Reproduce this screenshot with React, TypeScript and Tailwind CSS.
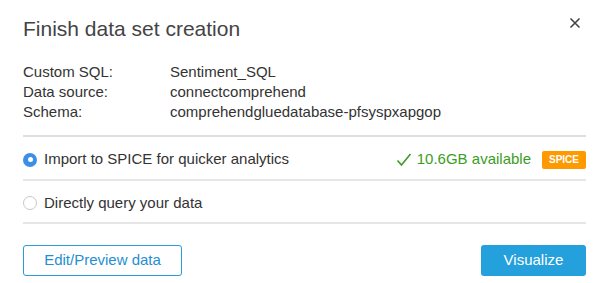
export default function App() {
  return (
    <main className="relative w-[600px] h-[283px] bg-white pl-[23px] pr-[14px] font-['Liberation_Sans',Arial,sans-serif] text-[#333]">
      <h1 className="pt-[15px] text-[21px] leading-[28px] text-[#444]">Finish data set creation</h1>
      <button className="absolute right-[19px] top-[17px] w-[12px] h-[12px]" aria-label="Close">
        <svg viewBox="0 0 12 12" className="w-[12px] h-[12px]">
          <path d="M1.5 1.5 L10.5 10.5 M10.5 1.5 L1.5 10.5" stroke="#444" strokeWidth="1.6" fill="none" />
        </svg>
      </button>

      <dl className="mt-[19px] text-[15px] leading-[20px] grid grid-cols-[147px_1fr]">
        <dt>Custom SQL:</dt>
        <dd>Sentiment_SQL</dd>
        <dt>Data source:</dt>
        <dd>connectcomprehend</dd>
        <dt>Schema:</dt>
        <dd>comprehendgluedatabase-pfsyspxapgop</dd>
      </dl>

      <div className="mt-[13px] h-[2px] bg-[#dedede]" />

      <label className="flex items-center h-[42px] pt-[3px] text-[15px]">
        <span className="w-[14px] h-[14px] rounded-full bg-[#3d8fe6] flex items-center justify-center mr-[7px]">
          <span className="w-[5px] h-[5px] rounded-full bg-white" />
        </span>
        <span className="flex-1">Import to SPICE for quicker analytics</span>
        <span className="flex items-center text-[#3a9d23] mr-[11px]">
          <svg viewBox="0 0 16 16" className="w-[16px] h-[16px] mr-[5px]">
            <path d="M1.5 8.5 L5.5 13 L14.5 2" stroke="#3a9d23" strokeWidth="1.6" fill="none" />
          </svg>
          10.6GB available
        </span>
        <span className="w-[44px] h-[18px] rounded-[2px] bg-[#ff9900] text-white text-[10px] font-bold flex items-center justify-center">
          SPICE
        </span>
      </label>

      <div className="h-[2px] bg-[#e6e6e6]" />

      <label className="flex items-center h-[41px] pt-[3px] text-[15px]">
        <span className="w-[14px] h-[14px] rounded-full border border-[#c8c8c8] mr-[7px]" />
        <span>Directly query your data</span>
      </label>

      <div className="h-[2px] bg-[#e6e6e6]" />

      <div className="mt-[21px] flex justify-between">
        <button className="w-[159px] h-[31px] rounded-[3px] border border-[#2a9ad8] text-[#1f8fd2] text-[15px]">
          Edit/Preview data
        </button>
        <button className="w-[105px] h-[31px] rounded-[3px] bg-[#24a0dc] text-white text-[15px]">
          Visualize
        </button>
      </div>
    </main>
  );
}
